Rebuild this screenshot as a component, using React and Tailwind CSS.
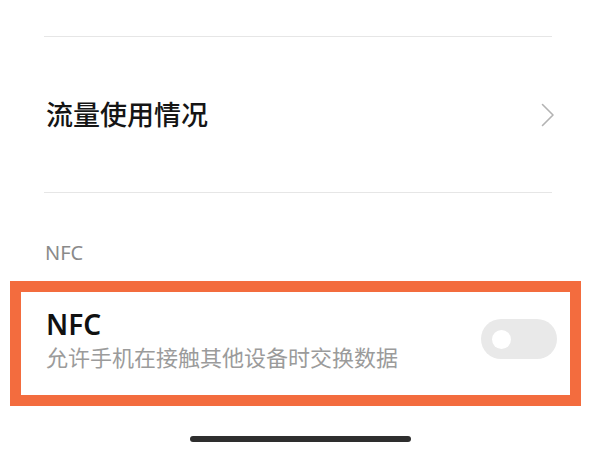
const Divider = () => <div className="ml-[44px] mr-[48px] h-px bg-[#e6e6e6]" />;

const App = () => {
  return (
    <div
      className="w-[600px] h-[450px] bg-white overflow-hidden"
      style={{ fontFamily: '"Noto Sans", "Noto Sans CJK SC", sans-serif' }}
    >
      <div className="h-[36px]" />
      <Divider />

      {/* Data usage row */}
      <div className="h-[155px] flex items-center justify-between pl-[46px] pr-[45px]">
        <span className="text-[27px] leading-none font-medium text-[#151515]">流量使用情况</span>
        <svg width="14" height="24" viewBox="0 0 14 24" fill="none">
          <path d="M1.5 1.5L12 12L1.5 22.5" stroke="#b3b3b3" strokeWidth="1.6" strokeLinecap="round" strokeLinejoin="round" />
        </svg>
      </div>
      <Divider />

      {/* Section header */}
      <div className="h-[88px] pt-[50px] pl-[45px]">
        <div className="text-[20px] leading-[20px] text-[#8a8a8a]">NFC</div>
      </div>

      {/* Highlighted NFC row */}
      <div className="mx-[10px] w-[571px] h-[125px] border-[11px] border-[#f36c3e] flex justify-between pl-[25px] pr-[13px]">
        <div className="pt-[18px]">
          <div className="text-[28px] leading-[28px] font-semibold text-[#111]">NFC</div>
          <div className="mt-[8px] text-[22px] leading-[22px] text-[#9b9b9b]">允许手机在接触其他设备时交换数据</div>
        </div>
        <div className="mt-[27px] w-[76px] h-[40px] rounded-full bg-[#e9e9e9] flex items-center pl-[11px]">
          <div className="w-[19px] h-[19px] rounded-full bg-white" />
        </div>
      </div>

      {/* Home indicator */}
      <div className="mt-[30px] mx-auto w-[221px] h-[6px] rounded-full bg-[#2e2e2e]" />
    </div>
  );
};

export default App;
